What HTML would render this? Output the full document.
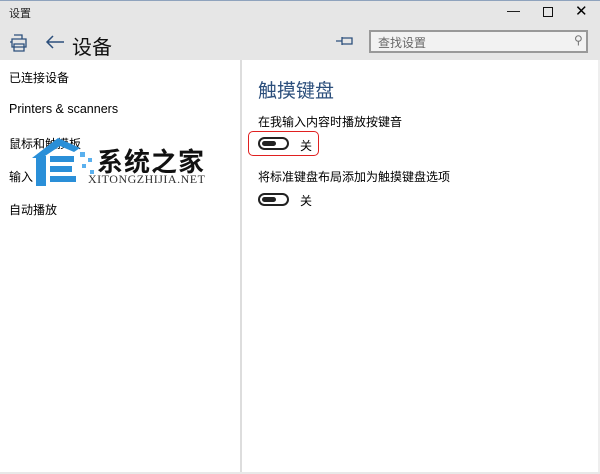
<!DOCTYPE html><html><head><meta charset="utf-8"><style>
body{margin:0;width:600px;height:474px;overflow:hidden;background:#fff;font-family:"Liberation Sans","Noto Sans CJK SC",sans-serif;position:relative;color:#000}
.a{position:absolute;white-space:nowrap}
</style></head><body>
<div class="a" style="left:0;top:0;width:600px;height:60px;background:#e6e6e6;border-top:1px solid #8fa3bd;box-sizing:border-box"></div>
<div class="a" style="left:9px;top:5px;font-size:11px;color:#222">设置</div>
<div class="a" style="left:507px;top:3px;font-size:13px">—</div>
<div class="a" style="left:543px;top:7px;width:8px;height:8px;border:1px solid #111"></div>
<div class="a" style="left:575px;top:2px;font-size:15px">✕</div>
<svg class="a" style="left:9px;top:33px" width="20" height="20" viewBox="0 0 20 20" fill="none" stroke="#2c4f7c" stroke-width="1.3"><path d="M5 2h8v4M3 6h14v8H3zM5 11h10v7H5zM7 14h6M1 9h2"/></svg>
<svg class="a" style="left:45px;top:34px" width="20" height="16" viewBox="0 0 20 16" fill="none" stroke="#2c4f7c" stroke-width="1.5"><path d="M19 8H2M8 2L2 8l6 6"/></svg>
<div class="a" style="left:72px;top:31px;font-size:20px;color:#111">设备</div>
<svg class="a" style="left:336px;top:36px" width="18" height="10" viewBox="0 0 18 10" fill="none" stroke="#2c4f7c" stroke-width="1.3"><path d="M0 5h6M6 1v8M6 2h10v6H6"/></svg>
<div class="a" style="left:369px;top:30px;width:219px;height:23px;border:2px solid #999;background:#f2f2f2;box-sizing:border-box"></div>
<div class="a" style="left:378px;top:34px;font-size:12px;color:#666">查找设置</div>
<div class="a" style="left:574px;top:33px;font-size:12px;color:#777">⚲</div>
<div class="a" style="left:240px;top:60px;width:2px;height:414px;background:#ddd"></div>
<div class="a" style="left:598px;top:60px;width:2px;height:414px;background:#eee"></div>
<div class="a" style="left:0;top:472px;width:600px;height:2px;background:#e8e8e8"></div>
<div class="a" style="left:9px;top:69px;font-size:12px">已连接设备</div>
<div class="a" style="left:9px;top:102px;font-size:12.5px">Printers &amp; scanners</div>
<div class="a" style="left:9px;top:135px;font-size:12px">鼠标和触摸板</div>
<div class="a" style="left:9px;top:168px;font-size:12px">输入</div>
<div class="a" style="left:9px;top:201px;font-size:12px">自动播放</div>
<svg class="a" style="left:30px;top:130px" width="70" height="60" viewBox="0 0 70 60"><path d="M2 28L28 8l22 10-6 4-14-6L12 28z" fill="#2a8fd8"/><rect x="6" y="26" width="10" height="30" fill="#2a8fd8"/><rect x="20" y="26" width="24" height="6" fill="#2a8fd8"/><rect x="20" y="36" width="22" height="6" fill="#2a8fd8"/><rect x="20" y="46" width="26" height="6" fill="#2a8fd8"/><rect x="50" y="22" width="5" height="5" fill="#5ab0ee"/><rect x="58" y="28" width="4" height="4" fill="#5ab0ee"/><rect x="52" y="34" width="4" height="4" fill="#5ab0ee"/><rect x="60" y="40" width="4" height="4" fill="#5ab0ee"/></svg>
<div class="a" style="left:97px;top:142px;font-size:26px;font-weight:bold;color:#111;letter-spacing:1px">系统之家</div>
<div class="a" style="left:88px;top:172px;font-size:12px;font-family:'Liberation Serif',serif;color:#333;letter-spacing:0.5px">XITONGZHIJIA.NET</div>
<div class="a" style="left:258px;top:76px;font-size:19px;color:#2c4f7c">触摸键盘</div>
<div class="a" style="left:258px;top:113px;font-size:12px">在我输入内容时播放按键音</div>
<div class="a" style="left:248px;top:131px;width:71px;height:25px;border:1.5px solid #e02020;border-radius:5px;box-sizing:border-box"></div>
<div class="a" style="left:258px;top:137px;width:31px;height:13px;border:2px solid #222;border-radius:8px;box-sizing:border-box"><div style="position:absolute;left:2px;top:2px;width:14px;height:5px;background:#222;border-radius:3px"></div></div>
<div class="a" style="left:300px;top:137px;font-size:12px">关</div>
<div class="a" style="left:258px;top:168px;font-size:12px">将标准键盘布局添加为触摸键盘选项</div>
<div class="a" style="left:258px;top:193px;width:31px;height:13px;border:2px solid #222;border-radius:8px;box-sizing:border-box"><div style="position:absolute;left:2px;top:2px;width:14px;height:5px;background:#222;border-radius:3px"></div></div>
<div class="a" style="left:300px;top:192px;font-size:12px">关</div>
</body></html>
